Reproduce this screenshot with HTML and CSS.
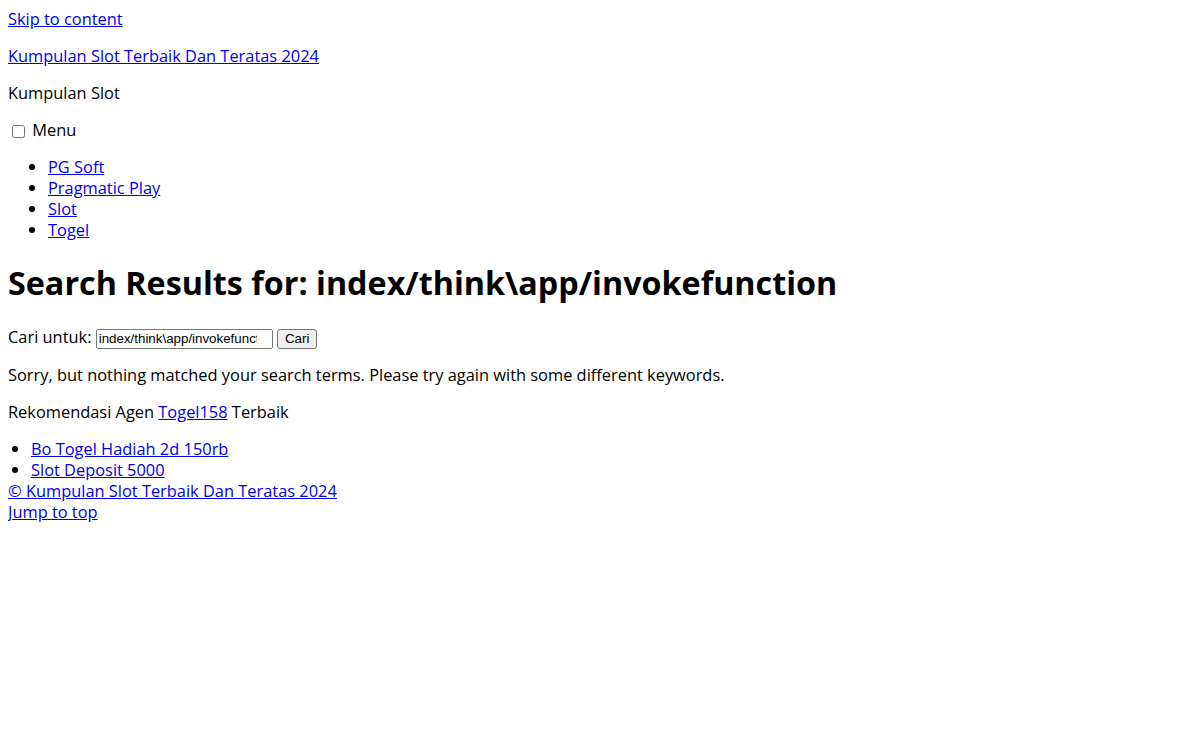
FILE: index.html
```html
<!DOCTYPE html>
<html lang="id">

<head>
    <meta charset="UTF-8">
    <meta name="viewport" content="width=device-width, initial-scale=1.0">
    <title>Search Results for: index/think\app/invokefunction</title>
    <link rel="stylesheet" href="styles.css">
</head>

<body>
    <a class="skip-link" href="#content">Skip to content</a>

    <header class="site-header">
        <p class="site-title"><a href="#">Kumpulan Slot Terbaik Dan Teratas 2024</a></p>
        <p class="site-description">Kumpulan Slot</p>
        <nav class="main-nav">
            <p class="menu-toggle">
                <input type="checkbox" id="menu-toggle"> <label for="menu-toggle">Menu</label>
            </p>
            <ul class="menu">
                <li><a href="#">PG Soft</a></li>
                <li><a href="#">Pragmatic Play</a></li>
                <li><a href="#">Slot</a></li>
                <li><a href="#">Togel</a></li>
            </ul>
        </nav>
    </header>

    <main id="content">
        <h1 class="page-title">Search Results for: index/think\app/invokefunction</h1>
        <form class="search-form">
            <label for="s">Cari untuk:</label>
            <input type="search" id="s" class="search-field" value="index/think\app/invokefunction">
            <button type="submit" class="search-submit">Cari</button>
        </form>
        <p>Sorry, but nothing matched your search terms. Please try again with some different keywords.</p>
    </main>

    <footer class="site-footer">
        <p>Rekomendasi Agen <a href="#">Togel158</a> Terbaik</p>
        <ul class="footer-links">
            <li><a href="#">Bo Togel Hadiah 2d 150rb</a></li>
            <li><a href="#">Slot Deposit 5000</a></li>
        </ul>
        <div class="copyright"><a href="#">&copy; Kumpulan Slot Terbaik Dan Teratas 2024</a></div>
        <div class="back-to-top"><a href="#">Jump to top</a></div>
    </footer>
</body>

</html>
```

FILE: styles.css
```css
body {
    margin: 8px;
    font-family: "Open Sans", "Noto Sans", sans-serif;
    font-size: 16.4px;
    line-height: 21px;
    color: #000;
    background: #fff;
}

a {
    color: #0000ee;
}

p {
    margin: 16px 0;
}

.menu-toggle {
    height: 21px;
}

.menu-toggle input {
    margin: 3px 3px 3px 4px;
    vertical-align: -2px;
}

.menu {
    margin: 16px 0;
    padding-left: 40px;
}

.page-title {
    font-size: 32.3px;
    line-height: 42px;
    font-weight: bold;
    margin: 21px 0;
}

.search-form {
    margin: 16px 0;
    padding-top: 1px;
    height: 23px;
    line-height: 24px;
}

.search-field {
    box-sizing: border-box;
    width: 177px;
    height: 20px;
    padding: 1px 2px;
    font-family: "Liberation Sans", Arial, sans-serif;
    font-size: 13.33px;
    border: 1px solid #767676;
    border-radius: 2px;
    -webkit-appearance: none;
    appearance: none;
}

.search-submit {
    height: 20px;
    padding: 1px 7px;
    font-family: "Liberation Sans", Arial, sans-serif;
    font-size: 13.33px;
    line-height: 16px;
    background: #efefef;
    border: 1px solid #767676;
    border-radius: 3px;
}

.footer-links {
    margin: 16px 0 0;
    padding-left: 23px;
}
```
